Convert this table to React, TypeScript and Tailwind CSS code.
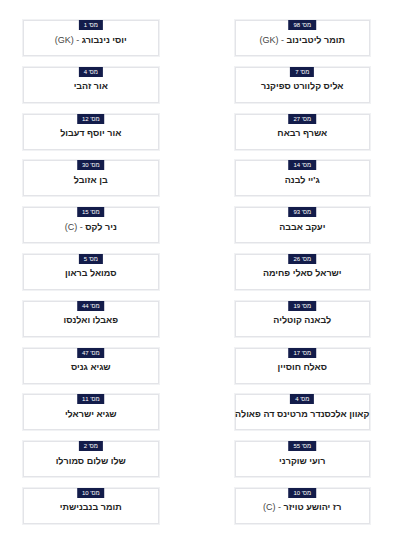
import React from "react";

type Player = { num: number; name: string; tag?: string };

const players: Player[] = [
  { num: 98, name: "תומר ליטבינוב", tag: "GK" },
  { num: 1, name: "יוסי נינבורג", tag: "GK" },
  { num: 7, name: "אליס קלוורט ספיקנר" },
  { num: 4, name: "אור זהבי" },
  { num: 27, name: "אשרף רבאח" },
  { num: 12, name: "אור יוסף דעבול" },
  { num: 14, name: "ג'יי לבנה" },
  { num: 30, name: "בן אזובל" },
  { num: 93, name: "יעקב אבבה" },
  { num: 15, name: "ניר לקס", tag: "C" },
  { num: 26, name: "ישראל סאלי פחימה" },
  { num: 5, name: "סמואל בראון" },
  { num: 19, name: "לבאנה קוטליה" },
  { num: 44, name: "פאבלו ואלנסו" },
  { num: 17, name: "סאלח חוסיין" },
  { num: 47, name: "שגיא גניס" },
  { num: 4, name: "קאוון אלכסנדר מרטינס דה פאולה" },
  { num: 11, name: "שגיא ישראלי" },
  { num: 55, name: "רועי שוקרני" },
  { num: 2, name: "שלו שלום סמורלו" },
  { num: 10, name: "רז יהושע טויזר", tag: "C" },
  { num: 10, name: "תומר בנבנישתי" },
];

function PlayerCard({ player }: { player: Player }) {
  return (
    <div className="relative h-[36px] bg-white border border-[#e3e4e8] shadow-[0_0_0_1px_#f1f2f4] flex items-center justify-center pt-[3px]">
      <div className="absolute top-[-1px] left-1/2 -translate-x-1/2 h-[10px] px-[5px] bg-[#131c4a] text-white text-[6px] leading-[10px] whitespace-nowrap">
        מס' {player.num}
      </div>
      <p className="text-[9px] leading-[14px] whitespace-nowrap text-[#222]">
        <span className="font-bold">{player.name}</span>
        {player.tag && (
          <span className="text-[#444]"> - ({player.tag})</span>
        )}
      </p>
    </div>
  );
}

export default function App() {
  return (
    <div
      dir="rtl"
      className="w-[403px] min-h-[534px] bg-white pt-[20px] pl-[23px] pr-[33px] font-['Liberation_Sans','DejaVu_Sans',sans-serif]"
    >
      <div className="grid grid-cols-2 gap-x-[76px] gap-y-[10.8px]">
        {players.map((p, i) => (
          <PlayerCard key={i} player={p} />
        ))}
      </div>
    </div>
  );
}
